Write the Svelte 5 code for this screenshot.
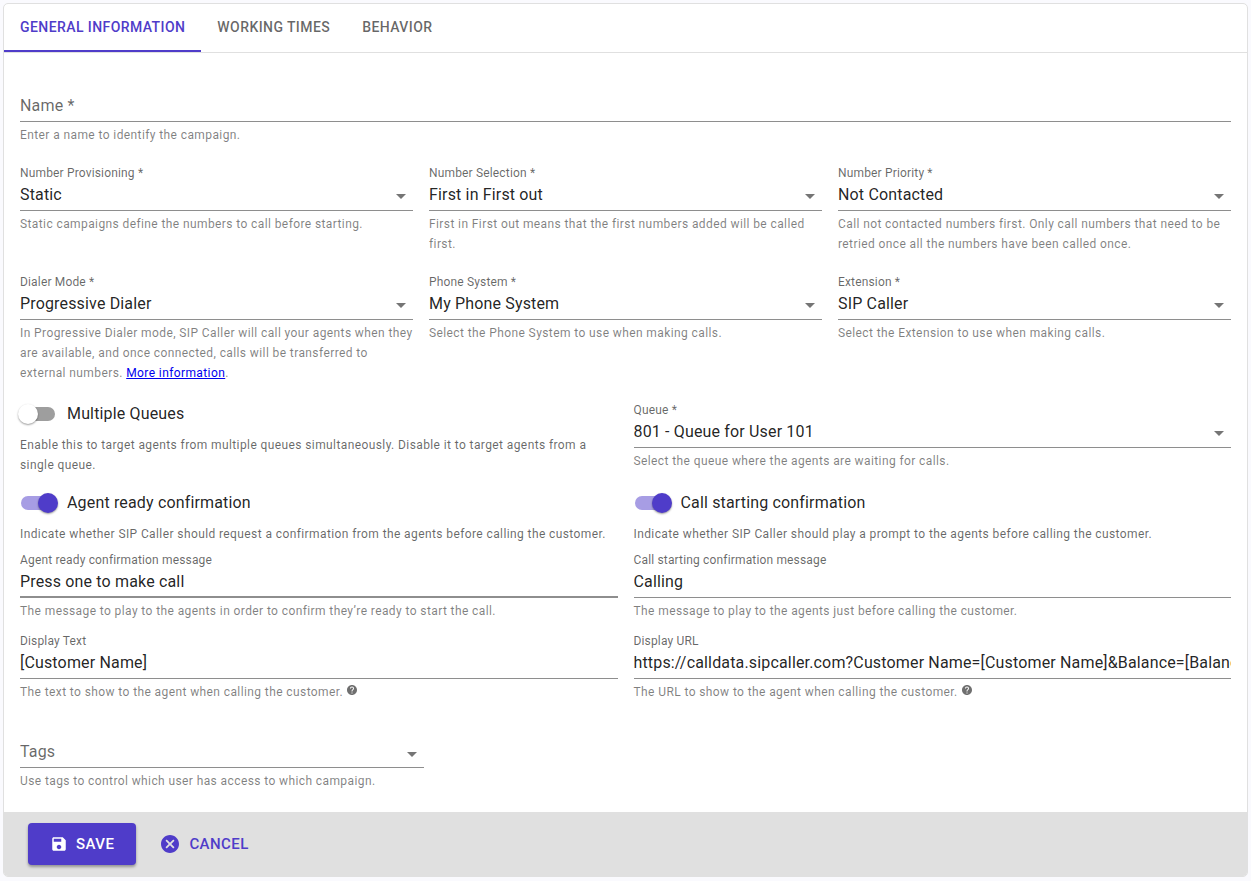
<script>
  const tabs = ['General Information', 'Working Times', 'Behavior'];
  let activeTab = $state(tabs[0]);

  let name = $state('');
  let tags = $state('');
  let multipleQueues = $state(false);
  let agentReady = $state(true);
  let callStarting = $state(true);
  let agentReadyMessage = $state('Press one to make call');
  let callStartingMessage = $state('Calling');
  let displayText = $state('[Customer Name]');
  let displayUrl = $state('https://calldata.sipcaller.com?Customer Name=[Customer Name]&Balance=[Balance]');

  const numberFields = [
    {
      id: 'provisioning',
      label: 'Number Provisioning',
      value: 'Static',
      hint: 'Static campaigns define the numbers to call before starting.'
    },
    {
      id: 'selection',
      label: 'Number Selection',
      value: 'First in First out',
      hint: 'First in First out means that the first numbers added will be called first.'
    },
    {
      id: 'priority',
      label: 'Number Priority',
      value: 'Not Contacted',
      hint: 'Call not contacted numbers first. Only call numbers that need to be retried once all the numbers have been called once.'
    }
  ];

  const dialerFields = [
    {
      id: 'dialer',
      label: 'Dialer Mode',
      value: 'Progressive Dialer',
      hint: 'In Progressive Dialer mode, SIP Caller will call your agents when they are available, and once connected, calls will be transferred to external numbers.',
      link: 'More information'
    },
    {
      id: 'phone-system',
      label: 'Phone System',
      value: 'My Phone System',
      hint: 'Select the Phone System to use when making calls.'
    },
    {
      id: 'extension',
      label: 'Extension',
      value: 'SIP Caller',
      hint: 'Select the Extension to use when making calls.'
    }
  ];

  const queueField = {
    id: 'queue',
    label: 'Queue',
    value: '801 - Queue for User 101',
    hint: 'Select the queue where the agents are waiting for calls.'
  };
</script>

{#snippet arrow()}
  <svg class="arrow" viewBox="0 0 10 5" aria-hidden="true"><path d="M0 0h10L5 5z" /></svg>
{/snippet}

{#snippet help()}
  <svg class="help" viewBox="2 2 20 20" role="img" aria-label="Help">
    <path d="M12 2C6.48 2 2 6.48 2 12s4.48 10 10 10 10-4.48 10-10S17.52 2 12 2zm1 17h-2v-2h2v2zm2.07-7.75l-.9.92C13.45 12.9 13 13.5 13 15h-2v-.5c0-1.1.45-2.1 1.17-2.83l1.24-1.26c.37-.36.59-.86.59-1.41 0-1.1-.9-2-2-2s-2 .9-2 2H8c0-2.21 1.79-4 4-4s4 1.79 4 4c0 .88-.36 1.68-.93 2.25z" />
  </svg>
{/snippet}

{#snippet selectField(f)}
  <div class="field">
    <label for={f.id}>{f.label} *</label>
    <div class="control">
      <select id={f.id}>
        <option>{f.value}</option>
      </select>
      {@render arrow()}
    </div>
    <p class="hint">{f.hint}{#if f.link}{' '}<a href="#more">{f.link}</a>.{/if}</p>
  </div>
{/snippet}

<form class="card" onsubmit={(e) => e.preventDefault()}>
  <div class="tabs" role="tablist">
    {#each tabs as tab}
      <button
        type="button"
        role="tab"
        class="tab"
        class:active={activeTab === tab}
        aria-selected={activeTab === tab}
        onclick={() => (activeTab = tab)}
      >{tab}</button>
    {/each}
  </div>

  <div class="body">
    <div class="field">
      <div class="control resting">
        <label for="name" class:hidden={name}>Name *</label>
        <input id="name" type="text" bind:value={name} />
      </div>
      <p class="hint">Enter a name to identify the campaign.</p>
    </div>

    <div class="row three">
      {#each numberFields as f (f.id)}
        {@render selectField(f)}
      {/each}
    </div>

    <div class="row three">
      {#each dialerFields as f (f.id)}
        {@render selectField(f)}
      {/each}
    </div>

    <div class="row two queues">
      <div>
        <label class="toggle">
          <input type="checkbox" role="switch" bind:checked={multipleQueues} />
          Multiple Queues
        </label>
        <p class="note">Enable this to target agents from multiple queues simultaneously. Disable it to target agents from a single queue.</p>
      </div>
      {@render selectField(queueField)}
    </div>

    <div class="row two confirm">
      <div>
        <label class="toggle">
          <input type="checkbox" role="switch" bind:checked={agentReady} />
          Agent ready confirmation
        </label>
        <p class="note">Indicate whether SIP Caller should request a confirmation from the agents before calling the customer.</p>
      </div>
      <div>
        <label class="toggle">
          <input type="checkbox" role="switch" bind:checked={callStarting} />
          Call starting confirmation
        </label>
        <p class="note">Indicate whether SIP Caller should play a prompt to the agents before calling the customer.</p>
      </div>
    </div>

    <div class="row two messages">
      <div class="field">
        <label for="ready-message">Agent ready confirmation message</label>
        <div class="control hovered">
          <input id="ready-message" type="text" bind:value={agentReadyMessage} />
        </div>
        <p class="hint">The message to play to the agents in order to confirm they’re ready to start the call.</p>
      </div>
      <div class="field">
        <label for="starting-message">Call starting confirmation message</label>
        <div class="control">
          <input id="starting-message" type="text" bind:value={callStartingMessage} />
        </div>
        <p class="hint">The message to play to the agents just before calling the customer.</p>
      </div>
      <div class="field">
        <label for="display-text">Display Text</label>
        <div class="control">
          <input id="display-text" type="text" bind:value={displayText} />
        </div>
        <p class="hint">The text to show to the agent when calling the customer. {@render help()}</p>
      </div>
      <div class="field">
        <label for="display-url">Display URL</label>
        <div class="control">
          <input id="display-url" type="text" bind:value={displayUrl} />
        </div>
        <p class="hint">The URL to show to the agent when calling the customer. {@render help()}</p>
      </div>
    </div>

    <div class="row">
      <div class="field third">
        <div class="control resting">
          <label for="tags" class:hidden={tags}>Tags</label>
          <select id="tags" bind:value={tags}>
            <option value=""></option>
          </select>
          {@render arrow()}
        </div>
        <p class="hint">Use tags to control which user has access to which campaign.</p>
      </div>
    </div>
  </div>

  <footer>
    <button type="submit" class="btn save">
      <svg viewBox="0 0 24 24" aria-hidden="true">
        <path d="M17 3H5c-1.11 0-2 .9-2 2v14c0 1.1.89 2 2 2h14c1.1 0 2-.9 2-2V7l-4-4zm-5 16c-1.66 0-3-1.34-3-3s1.34-3 3-3 3 1.34 3 3-1.34 3-3 3zm3-10H5V5h10v4z" />
      </svg>
      Save
    </button>
    <button type="button" class="btn cancel">
      <svg viewBox="2 2 20 20" aria-hidden="true">
        <path d="M12 2C6.47 2 2 6.47 2 12s4.47 10 10 10 10-4.47 10-10S17.53 2 12 2zm5 13.59L15.59 17 12 13.41 8.41 17 7 15.59 10.59 12 7 8.41 8.41 7 12 10.59 15.59 7 17 8.41 13.41 12 17 15.59z" />
      </svg>
      Cancel
    </button>
  </footer>
</form>

<style>
  :global(body) {
    background: #fafafe;
    color: rgba(0, 0, 0, 0.87);
    font-family: Roboto, sans-serif;
  }

  .card {
    margin: 3px;
    background: #fff;
    border: 1px solid #e0e0e0;
    border-radius: 5px;
    overflow: hidden;
    font-size: 16px;
    letter-spacing: 0.01em;
  }

  button, input, select {
    font: inherit;
    letter-spacing: inherit;
    color: inherit;
  }

  p { margin: 0; }

  /* tabs */
  .tabs {
    display: flex;
    border-bottom: 1px solid #e0e0e0;
  }
  .tab {
    height: 48px;
    padding: 0 16px;
    border: 0;
    border-bottom: 2px solid transparent;
    background: none;
    color: rgba(0, 0, 0, 0.6);
    font-size: 14px;
    font-weight: 500;
    letter-spacing: 0.03em;
    text-transform: uppercase;
    cursor: pointer;
  }
  .tab.active {
    color: #4f3cc9;
    border-bottom-color: #4f3cc9;
  }

  .body { padding: 21px 16px; }

  .row { margin-top: 18px; }
  .two, .three {
    display: grid;
    column-gap: 16px;
  }
  .two { grid-template-columns: repeat(2, minmax(0, 1fr)); }
  .three { grid-template-columns: repeat(3, minmax(0, 1fr)); }
  .queues { margin-top: 17px; }
  .confirm { margin-top: 14px; }
  .messages { margin-top: 6px; row-gap: 10px; }
  .third { width: calc(100% / 3); }

  /* fields */
  .field label {
    display: block;
    font-size: 12px;
    line-height: 20px;
    color: rgba(0, 0, 0, 0.6);
  }
  .control {
    display: grid;
    align-items: center;
    height: 28px;
    box-sizing: border-box;
    padding-bottom: 4px;
    border-bottom: 1px solid #8e8e8e;
  }
  .control > * { grid-area: 1 / 1; }
  .control.hovered { border-bottom-width: 2px; padding-bottom: 3px; }
  .control.resting { height: 48px; padding-bottom: 3px; align-items: end; }
  .control.resting label { font-size: 16px; line-height: 24px; }
  .control.resting .arrow { margin-bottom: 7px; }
  .hidden { visibility: hidden; }

  .control input,
  .control select {
    width: 100%;
    min-width: 0;
    height: 21px;
    padding: 0;
    border: 0;
    outline: 0;
    background: none;
    appearance: none;
    text-overflow: clip;
  }
  .arrow {
    width: 10px;
    height: 5px;
    margin: 4px 7px 0 0;
    justify-self: end;
    fill: #757575;
    pointer-events: none;
  }

  .hint, .note {
    font-size: 12px;
    line-height: 20px;
    letter-spacing: 0.0333em;
  }
  .hint { padding-top: 3px; color: rgba(0, 0, 0, 0.5); }
  .note { padding-top: 9px; color: rgba(0, 0, 0, 0.6); }
  .hint a { color: #0000ee; }
  .help {
    width: 10px;
    height: 10px;
    margin-left: 1px;
    vertical-align: 1px;
    fill: #6f6f6f;
  }

  /* switches */
  .toggle {
    display: flex;
    align-items: center;
    height: 26px;
  }
  .toggle input {
    width: 34px;
    height: 14px;
    margin: 2px 12px 0 1px;
    border-radius: 7px;
    background: #9e9e9e;
    appearance: none;
    display: flex;
    align-items: center;
  }
  .toggle input::before {
    content: '';
    flex: none;
    width: 20px;
    height: 20px;
    margin-left: -3px;
    border-radius: 50%;
    background: #fff;
    box-shadow: 0 1px 2px rgba(0, 0, 0, 0.4);
  }
  .toggle input:checked { background: #a79de4; }
  .toggle input:checked::before { margin-left: 17px; background: #4f3cc9; }

  footer {
    display: flex;
    gap: 25px;
    padding: 11px 24px;
    background: #e0e0e0;
  }
  .btn {
    display: flex;
    align-items: center;
    gap: 8px;
    height: 42px;
    padding: 0;
    border: 0;
    border-radius: 4px;
    background: none;
    font-size: 15px;
    font-weight: 500;
    letter-spacing: 0.03em;
    text-transform: uppercase;
    cursor: pointer;
  }
  .btn svg { width: 18px; height: 18px; fill: currentColor; }
  .save {
    padding: 0 22px;
    background: #4f3cc9;
    color: #fff;
    box-shadow: 0 2px 3px rgba(0, 0, 0, 0.35);
  }
  .cancel { gap: 10px; color: #4f3cc9; }
</style>
